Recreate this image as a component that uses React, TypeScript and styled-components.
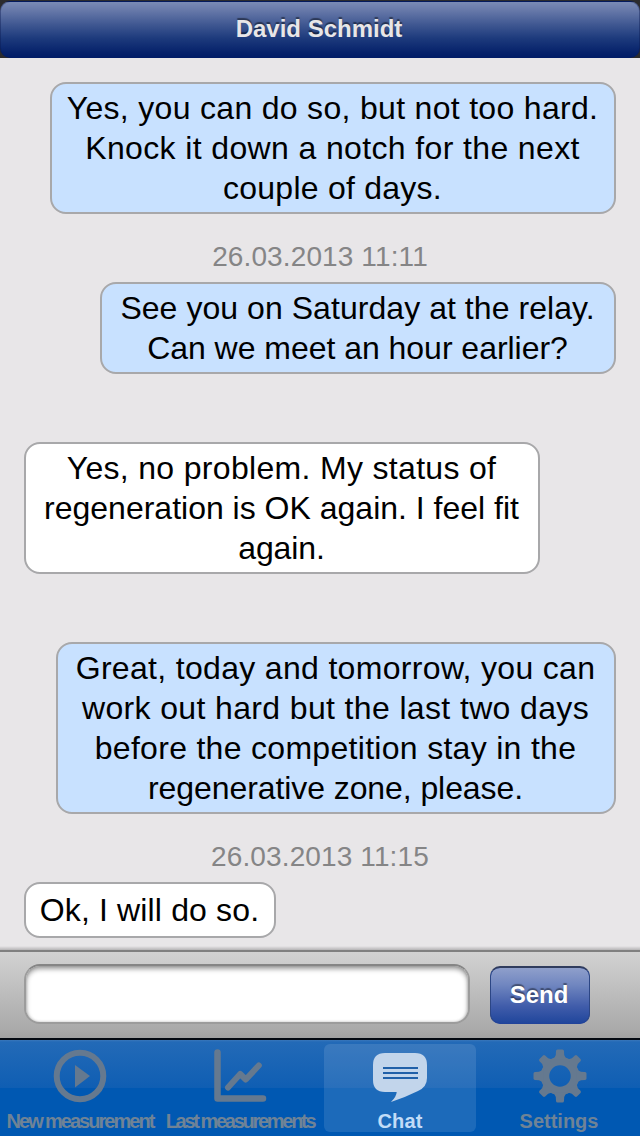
import React from "react";
import styled, { createGlobalStyle, css } from "styled-components";

const Global = createGlobalStyle`
  * { box-sizing: border-box; }
  body { margin: 0; background: #e8e6e8; font-family: "Liberation Sans", Arial, sans-serif; }
`;

const Screen = styled.div`
  width: 640px;
  height: 1136px;
  display: flex;
  flex-direction: column;
  overflow: hidden;
  background: #e8e6e8;
`;

const HeaderFrame = styled.header`
  flex: none;
  height: 58px;
  padding-top: 1px;
  background: #2b2b2d;
`;

const Header = styled.div`
  height: 57px;
  display: flex;
  align-items: center;
  justify-content: center;
  border-radius: 10px;
  border: 1px solid rgba(10, 25, 80, 0.4);
  border-width: 1px 1px 0;
  background: linear-gradient(#7a8bb5 0%, #6577a8 16%, #405892 40%, #1d3a7c 65%, #06226b 90%, #001c66 100%);
`;

const Title = styled.h1`
  margin: 0;
  padding: 0 2px 2px 0;
  font-size: 24px;
  font-weight: bold;
  line-height: 28px;
  color: #e8e6e8;
  text-shadow: 0 -2px 1px rgba(0, 0, 0, 0.45);
`;

const Messages = styled.main`
  flex: none;
  height: 892px;
  padding: 24px 24px 0;
  display: flex;
  flex-direction: column;
  background: linear-gradient(rgba(0, 0, 0, 0) 888px, rgba(0, 0, 0, 0.22) 892px);
`;

const Gap = styled.div`
  flex: none;
  height: 68px;
  padding-top: 23px;
`;

const Stamp = styled.time`
  display: block;
  text-align: center;
  font-size: 28px;
  line-height: 40px;
  letter-spacing: 0.12px;
  color: #858586;
`;

const Bubble = styled.div<{ $w: number; $mine?: boolean; $single?: boolean }>`
  flex: none;
  width: ${(p) => p.$w}px;
  align-self: ${(p) => (p.$mine ? "flex-end" : "flex-start")};
  padding: ${(p) => (p.$single ? "6px" : "4px")} 0;
  border: 2px solid #a8a8aa;
  border-radius: 16px;
  background: ${(p) => (p.$mine ? "#c8e1ff" : "#fff")};
`;

const Line = styled.div<{ $ls?: number }>`
  padding-right: 1px;
  text-align: center;
  white-space: nowrap;
  font-size: 32px;
  line-height: 40px;
  letter-spacing: ${(p) => p.$ls ?? 0}px;
  color: #000;
`;

const Composer = styled.form`
  flex: none;
  height: 88px;
  padding: 12px 24px;
  display: flex;
  align-items: flex-start;
  gap: 20px;
  border-top: 2px solid #808080;
  background: linear-gradient(#d2d2d2, #a9a9a9 92%, #a2a2a2);
`;

const Input = styled.input`
  width: 446px;
  height: 60px;
  padding: 0 16px;
  font: 32px "Liberation Sans", Arial, sans-serif;
  border: 2px solid #9c9c9c;
  border-top-color: #858585;
  border-radius: 16px;
  outline: none;
  background: #fff;
  box-shadow: inset 0 3px 5px rgba(0, 0, 0, 0.38), inset 0 0 3px rgba(0, 0, 0, 0.2);
`;

const SendButton = styled.button`
  width: 100px;
  height: 58px;
  margin-top: 2px;
  padding: 0 2px 2px 0;
  border: 1px solid #2c4685;
  border-top: 2px solid #303c5e;
  border-bottom-color: #21439a;
  border-radius: 10px;
  font: bold 24px "Liberation Sans", Arial, sans-serif;
  color: #fff;
  text-shadow: 0 -2px 1px rgba(0, 0, 0, 0.4);
  background: linear-gradient(#8f9fcb, #7187c0 30%, #405caa 70%, #20469c) padding-box, #21439a;
`;

const TabBar = styled.nav`
  flex: none;
  height: 98px;
  display: flex;
  padding: 4px 0 4px;
  border-top: 2px solid #050a12;
  background: linear-gradient(#3977ba 0, #236ab7 2px, #0f5eb3 48px, #0058b2 48px, #0058b2);
`;

const Tab = styled.a<{ $active?: boolean }>`
  width: 152px;
  margin: 0 4px;
  height: 88px;
  flex: none;
  display: flex;
  flex-direction: column;
  align-items: center;
  border-radius: 6px;
  color: #6f8396;
  svg { flex: none; display: block; }
  ${(p) =>
    p.$active &&
    css`
      color: #c2dcf7;
      background: rgba(255, 255, 255, 0.11);
    `}
`;

const TabLabel = styled.span<{ $ls?: number; $ws?: number; $pr?: number }>`
  padding-right: ${(p) => p.$pr ?? 0}px;
  font-size: 20px;
  font-weight: bold;
  line-height: 22px;
  white-space: nowrap;
  letter-spacing: ${(p) => p.$ls ?? 0}px;
  word-spacing: ${(p) => p.$ws ?? 0}px;
`;

const ICON = "#65798f";

const PlayIcon = () => (
  <svg width="64" height="66" viewBox="0 0 64 66">
    <circle cx="32" cy="32" r="23.3" fill="none" stroke={ICON} strokeWidth="6" />
    <path d="M27 21 L42 32 L27 43.500Z" fill={ICON} />
  </svg>
);

const GraphIcon = () => (
  <svg width="64" height="66" viewBox="0 0 64 66" fill="none" stroke={ICON} strokeLinecap="round">
    <path d="M9.500 8.500V54.500H55" strokeWidth="6.500" strokeLinejoin="round" />
    <path d="M20 43.500 L32.200 30 L37.800 35.500 L50.800 21.500" strokeWidth="6" strokeLinejoin="round" />
  </svg>
);

const ChatIcon = () => (
  <svg width="64" height="66" viewBox="0 0 64 66">
    <path
      d="M17 9H47Q59 9 59 21V34Q59 43 50 47Q38 53 23 58Q28.500 52.500 28.700 48H17Q5 48 5 36V21Q5 9 17 9Z"
      fill="#c2d5eb"
    />
    <path d="M15 24H50M15 29H50M15 34H50" stroke="#2060a8" strokeWidth="2" />
  </svg>
);

const GearIcon = () => (
  <svg width="64" height="66" viewBox="0 0 64 66">
    <circle cx="32" cy="32" r="15" fill="none" stroke={ICON} strokeWidth="8.5" />
    {[0, 45, 90, 135, 180, 225, 270, 315].map((a) => (
      <path
        key={a}
        transform={`rotate(${a} 32 32)`}
        d="M25.500 15.500L27.800 11L28 7Q28.200 5.500 29.500 5.500H34.500Q35.800 5.500 36 7L36.200 11L38.500 15.500Z"
        fill={ICON}
      />
    ))}
  </svg>
);

export default function App() {
  return (
    <>
      <Global />
      <Screen>
        <HeaderFrame>
          <Header>
            <Title>David Schmidt</Title>
          </Header>
        </HeaderFrame>
        <Messages>
          <Bubble $w={566} $mine>
            <Line $ls={0.31}>Yes, you can do so, but not too hard.</Line>
            <Line $ls={0.37}>Knock it down a notch for the next</Line>
            <Line $ls={0.25}>couple of days.</Line>
          </Bubble>
          <Gap>
            <Stamp>26.03.2013 11:11</Stamp>
          </Gap>
          <Bubble $w={516} $mine>
            <Line $ls={0.05}>See you on Saturday at the relay.</Line>
            <Line $ls={-0.03}>Can we meet an hour earlier?</Line>
          </Bubble>
          <Gap />
          <Bubble $w={516}>
            <Line $ls={0.32}>Yes, no problem. My status of</Line>
            <Line>regeneration is OK again. I feel fit</Line>
            <Line $ls={-0.1}>again.</Line>
          </Bubble>
          <Gap />
          <Bubble $w={560} $mine>
            <Line $ls={0.32}>Great, today and tomorrow, you can</Line>
            <Line $ls={0.36}>work out hard but the last two days</Line>
            <Line $ls={0.3}>before the competition stay in the</Line>
            <Line $ls={-0.08}>regenerative zone, please.</Line>
          </Bubble>
          <Gap>
            <Stamp>26.03.2013 11:15</Stamp>
          </Gap>
          <Bubble $w={252} $single>
            <Line $ls={0.15}>Ok, I will do so.</Line>
          </Bubble>
        </Messages>
        <Composer onSubmit={(e) => e.preventDefault()}>
          <Input aria-label="Message" />
          <SendButton type="submit">Send</SendButton>
        </Composer>
        <TabBar>
          <Tab>
            <PlayIcon />
            <TabLabel $ls={-1.95} $ws={-0.5}>New measurement</TabLabel>
          </Tab>
          <Tab>
            <GraphIcon />
            <TabLabel $ls={-2.28} $ws={-0.5}>Last measurements</TabLabel>
          </Tab>
          <Tab $active>
            <ChatIcon />
            <TabLabel $ls={0.2}>Chat</TabLabel>
          </Tab>
          <Tab>
            <GearIcon />
            <TabLabel $pr={2}>Settings</TabLabel>
          </Tab>
        </TabBar>
      </Screen>
    </>
  );
}
